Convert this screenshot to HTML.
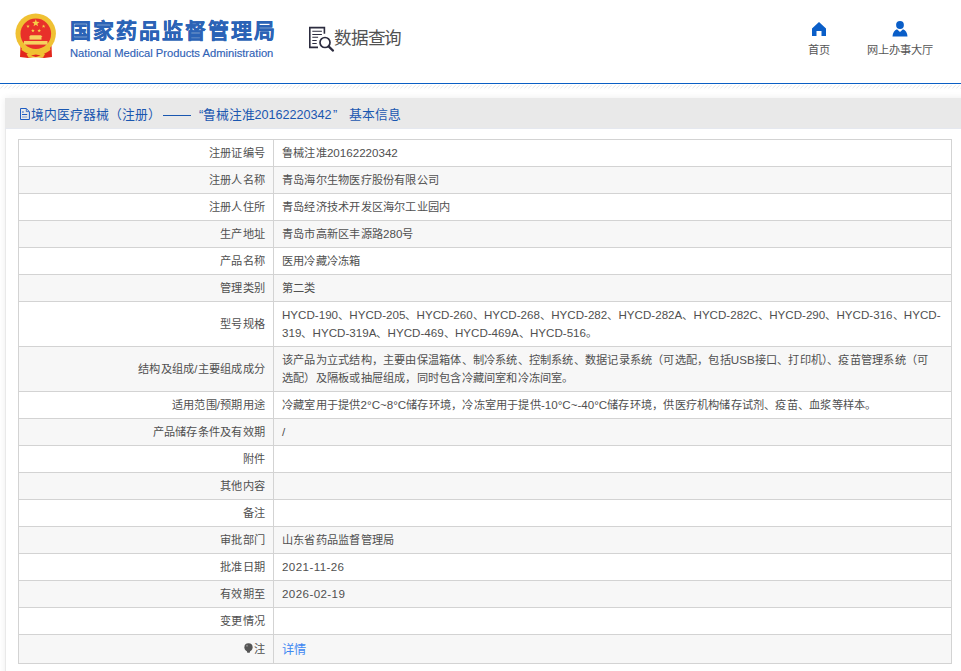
<!DOCTYPE html>
<html lang="zh-CN"><head><meta charset="utf-8">
<style>
*{margin:0;padding:0;box-sizing:border-box}
html,body{width:961px;height:671px;overflow:hidden;background:#fff;font-family:"Liberation Sans",sans-serif}
.hd{position:absolute;left:0;top:0;width:961px;height:84px;background:#fff;border-bottom:1px solid #0a5fc4}
.emb{position:absolute;left:12px;top:10px;width:48px;height:50px}
.t1{position:absolute;left:70px;top:16px;letter-spacing:1.95px;font-size:21px;font-weight:900;-webkit-text-stroke:0.3px #2b63b6;color:#2b63b6;white-space:nowrap;line-height:30px}
.t2{position:absolute;left:70px;top:45.5px;font-size:11.2px;color:#2f62b6;-webkit-text-stroke:0.15px #2f62b6;white-space:nowrap;line-height:14px}
.srch{position:absolute;left:308px;top:25px;width:28px;height:28px}
.sq{position:absolute;left:334px;top:24.5px;font-size:17.6px;letter-spacing:-1.2px;color:#525252;line-height:26px;white-space:nowrap}
.nav{position:absolute;top:17px;text-align:center;font-size:11.2px;color:#555;line-height:16px;white-space:nowrap}
.hatch{position:absolute;left:0;top:84px;width:961px;height:5px}
.box{position:absolute;left:5px;top:98px;width:970px;height:600px;background:#fff;border-left:1px solid #e9e9e9;box-shadow:0 0 7px rgba(0,0,0,.07)}
.ttl{position:absolute;left:-1px;top:0;width:971px;height:31px;background:#e9e9e9;border-bottom:1px solid #e5e8ef;color:#1a57b0;font-size:13px;line-height:30px;white-space:nowrap}
.ttl .ic{position:absolute;left:15px;top:10px}
.ttl .dash{position:absolute;left:157.5px;top:16.5px;width:28px;height:1px;background:#1a57b0}
.ttl span.tx{position:absolute;top:2px;font-size:12.8px}
table{position:absolute;left:12px;top:41px;width:934px;border-collapse:collapse;font-size:11.2px;color:#505050}
i{font-style:normal;font-size:11.6px;letter-spacing:0}
.pin{display:inline-block;vertical-align:-1px;margin-right:1px}
td{border:1px solid #d3d3d3;height:27px;padding:0 8px;letter-spacing:0.22px;line-height:18px;vertical-align:middle;white-space:nowrap}
tr.last td{height:29px}
td.l{width:255px;text-align:right}
tr:nth-child(even) td{background:#f7f7f7}
tr.tall td{height:45px}
.lnk{color:#3f88f2;font-size:12.2px;padding-top:2px}
</style></head><body>
<div class="hd">
  <svg class="emb" width="48" height="50" viewBox="0 0 48 50">
    <path d="M8.5 36 L39.5 36 L40 47 L32 48 L24 46.5 L16 48 L8 47 Z" fill="#e2261c"/>
    <circle cx="23.7" cy="23.6" r="20.2" fill="#f0c133"/>
    <circle cx="23.8" cy="23.8" r="15.3" fill="#e8302a"/>
    <polygon points="23.80,9.30 24.76,11.87 27.51,11.99 25.36,13.71 26.09,16.36 23.80,14.84 21.51,16.36 22.24,13.71 20.09,11.99 22.84,11.87" fill="#f6cf47"/>
    <polygon points="16.00,14.40 16.47,15.65 17.81,15.71 16.76,16.55 17.12,17.84 16.00,17.10 14.88,17.84 15.24,16.55 14.19,15.71 15.53,15.65" fill="#f6cf47"/>
    <polygon points="31.60,14.40 32.07,15.65 33.41,15.71 32.36,16.55 32.72,17.84 31.60,17.10 30.48,17.84 30.84,16.55 29.79,15.71 31.13,15.65" fill="#f6cf47"/>
    <polygon points="20.90,18.80 21.37,20.05 22.71,20.11 21.66,20.95 22.02,22.24 20.90,21.50 19.78,22.24 20.14,20.95 19.09,20.11 20.43,20.05" fill="#f6cf47"/>
    <polygon points="27.20,18.80 27.67,20.05 29.01,20.11 27.96,20.95 28.32,22.24 27.20,21.50 26.08,22.24 26.44,20.95 25.39,20.11 26.73,20.05" fill="#f6cf47"/>
    <path d="M18.5 25.3 H29 L30.5 27 H17 Z" fill="#f6d260"/><rect x="17.5" y="27" width="12" height="2.6" fill="#f6d260"/>
    <rect x="12" y="31" width="23.5" height="3.6" fill="#f6d260"/>
    <path d="M10 37 Q24 47 38 37 L38.5 40 Q24 51 9.5 40 Z" fill="#f0c133"/>
    <ellipse cx="23.8" cy="41.5" rx="5" ry="2.6" fill="#f0c133"/>
    <path d="M14.5 44 L33 44 L31 47.5 L16.5 47.5 Z" fill="#f0c133"/>
    <path d="M19 45.5 L23.8 44.6 L28.6 45.5 L23.8 47 Z" fill="#e2261c"/>
  </svg>
  <div class="t1">国家药品监督管理局</div>
  <div class="t2">National Medical Products Administration</div>
  <svg class="srch" viewBox="0 0 28 28">
    <path d="M10 22.4 H1.8 V2.6 H16.4 V8.8" fill="none" stroke="#2c2c3f" stroke-width="1.6"/>
    <path d="M4.3 6.3 H13.9 M4.3 9.4 H13.9 M4.3 12.3 H10.1 M4.3 15.4 H8.7 M4.3 18.5 H8.7" stroke="#2c2c3f" stroke-width="1.05"/>
    <circle cx="17" cy="17.5" r="5" fill="#fff" stroke="#2c2c3f" stroke-width="1.7"/>
    <path d="M20.6 21.4 L25 25.6" stroke="#2c2c3f" stroke-width="2.2" stroke-linecap="round"/>
  </svg>
  <div class="sq">数据查询</div>
  <div class="nav" style="left:806px;width:26px">
    <svg width="16" height="16" viewBox="0 0 16 16" style="display:block;margin:4px auto 5px"><path d="M8 1 L15 7.5 V15 H10.5 V10 H5.5 V15 H1 V7.5 Z" fill="#0a5ec8"/></svg>首页</div>
  <div class="nav" style="left:866px;width:67px">
    <svg width="16" height="16" viewBox="0 0 16 16" style="display:block;margin:4px auto 5px"><circle cx="8" cy="4" r="3.9" fill="#0a5ec8"/><path d="M0.5 15.5 Q1 9.5 5 8.2 L8 11 L11 8.2 Q15 9.5 15.5 15.5 Z" fill="#0a5ec8"/></svg>网上办事大厅</div>
</div>
<svg class="hatch" width="961" height="5"><defs><pattern id="hp" width="4" height="5" patternUnits="userSpaceOnUse"><path d="M0.2 4.6 L3.6 1.2" stroke="#e6e6e6" stroke-width="1"/></pattern></defs><rect width="961" height="5" fill="url(#hp)"/></svg>
<div class="box">
  <div class="ttl">
    <svg class="ic" width="10" height="12" viewBox="0 0 10 12"><path d="M0.5 0.5 H6.2 L9.4 3.7 V11.5 H0.5 Z" fill="none" stroke="#1d5cc2" stroke-width="1"/><path d="M6.3 0.8 V3.6 H9.2" fill="none" stroke="#1d5cc2" stroke-width="0.8"/><path d="M2 4 H3.8 M2 6.5 H7.2" stroke="#1d5cc2" stroke-width="1"/><path d="M2 9 H7.2" stroke="#7f9fd6" stroke-width="1"/></svg>
    <span class="tx" style="left:26px">境内医疗器械（注册）</span><i class="dash"></i><span class="tx" style="left:194px">“</span><span class="tx" style="left:198px">鲁械注准</span><span class="tx" style="left:249.5px;font-size:12.6px">20162220342</span><span class="tx" style="left:328px">”</span><span class="tx" style="left:344px">基本信息</span>
  </div>
  <table>
    <tr><td class="l">注册证编号</td><td>鲁械注准<i>20162220342</i></td></tr>
    <tr><td class="l">注册人名称</td><td>青岛海尔生物医疗股份有限公司</td></tr>
    <tr><td class="l">注册人住所</td><td>青岛经济技术开发区海尔工业园内</td></tr>
    <tr><td class="l">生产地址</td><td>青岛市高新区丰源路<i>280</i>号</td></tr>
    <tr><td class="l">产品名称</td><td>医用冷藏冷冻箱</td></tr>
    <tr><td class="l">管理类别</td><td>第二类</td></tr>
    <tr class="tall"><td class="l">型号规格</td><td><i>HYCD-190</i>、<i>HYCD-205</i>、<i>HYCD-260</i>、<i>HYCD-268</i>、<i>HYCD-282</i>、<i>HYCD-282A</i>、<i>HYCD-282C</i>、<i>HYCD-290</i>、<i>HYCD-316</i>、<i>HYCD-</i><br><i>319</i>、<i>HYCD-319A</i>、<i>HYCD-469</i>、<i>HYCD-469A</i>、<i>HYCD-516</i>。</td></tr>
    <tr class="tall"><td class="l">结构及组成/主要组成成分</td><td>该产品为立式结构，主要由保温箱体、制冷系统、控制系统、数据记录系统（可选配，包括<i>USB</i>接口、打印机）、疫苗管理系统（可<br>选配）及隔板或抽屉组成，同时包含冷藏间室和冷冻间室。</td></tr>
    <tr><td class="l">适用范围/预期用途</td><td>冷藏室用于提供<i>2°C~8°C</i>储存环境，冷冻室用于提供<i>-10°C~-40°C</i>储存环境，供医疗机构储存试剂、疫苗、血浆等样本。</td></tr>
    <tr><td class="l">产品储存条件及有效期</td><td><i>/</i></td></tr>
    <tr><td class="l">附件</td><td></td></tr>
    <tr><td class="l">其他内容</td><td></td></tr>
    <tr><td class="l">备注</td><td></td></tr>
    <tr><td class="l">审批部门</td><td>山东省药品监督管理局</td></tr>
    <tr><td class="l">批准日期</td><td><i style="letter-spacing:0.4px">2021-11-26</i></td></tr>
    <tr><td class="l">有效期至</td><td><i style="letter-spacing:0.4px">2026-02-19</i></td></tr>
    <tr><td class="l">变更情况</td><td></td></tr>
    <tr class="last"><td class="l"><svg class="pin" width="9" height="11" viewBox="0 0 9 11"><circle cx="4.5" cy="4.3" r="4.1" fill="#555"/><path d="M2.4 7 L6.6 7 L5.7 9.8 L3.3 9.8 Z" fill="#555"/><circle cx="3" cy="2.8" r="1" fill="#8a8a8a"/></svg>注</td><td class="lnk">详情</td></tr>
  </table>
</div>
</body></html>
